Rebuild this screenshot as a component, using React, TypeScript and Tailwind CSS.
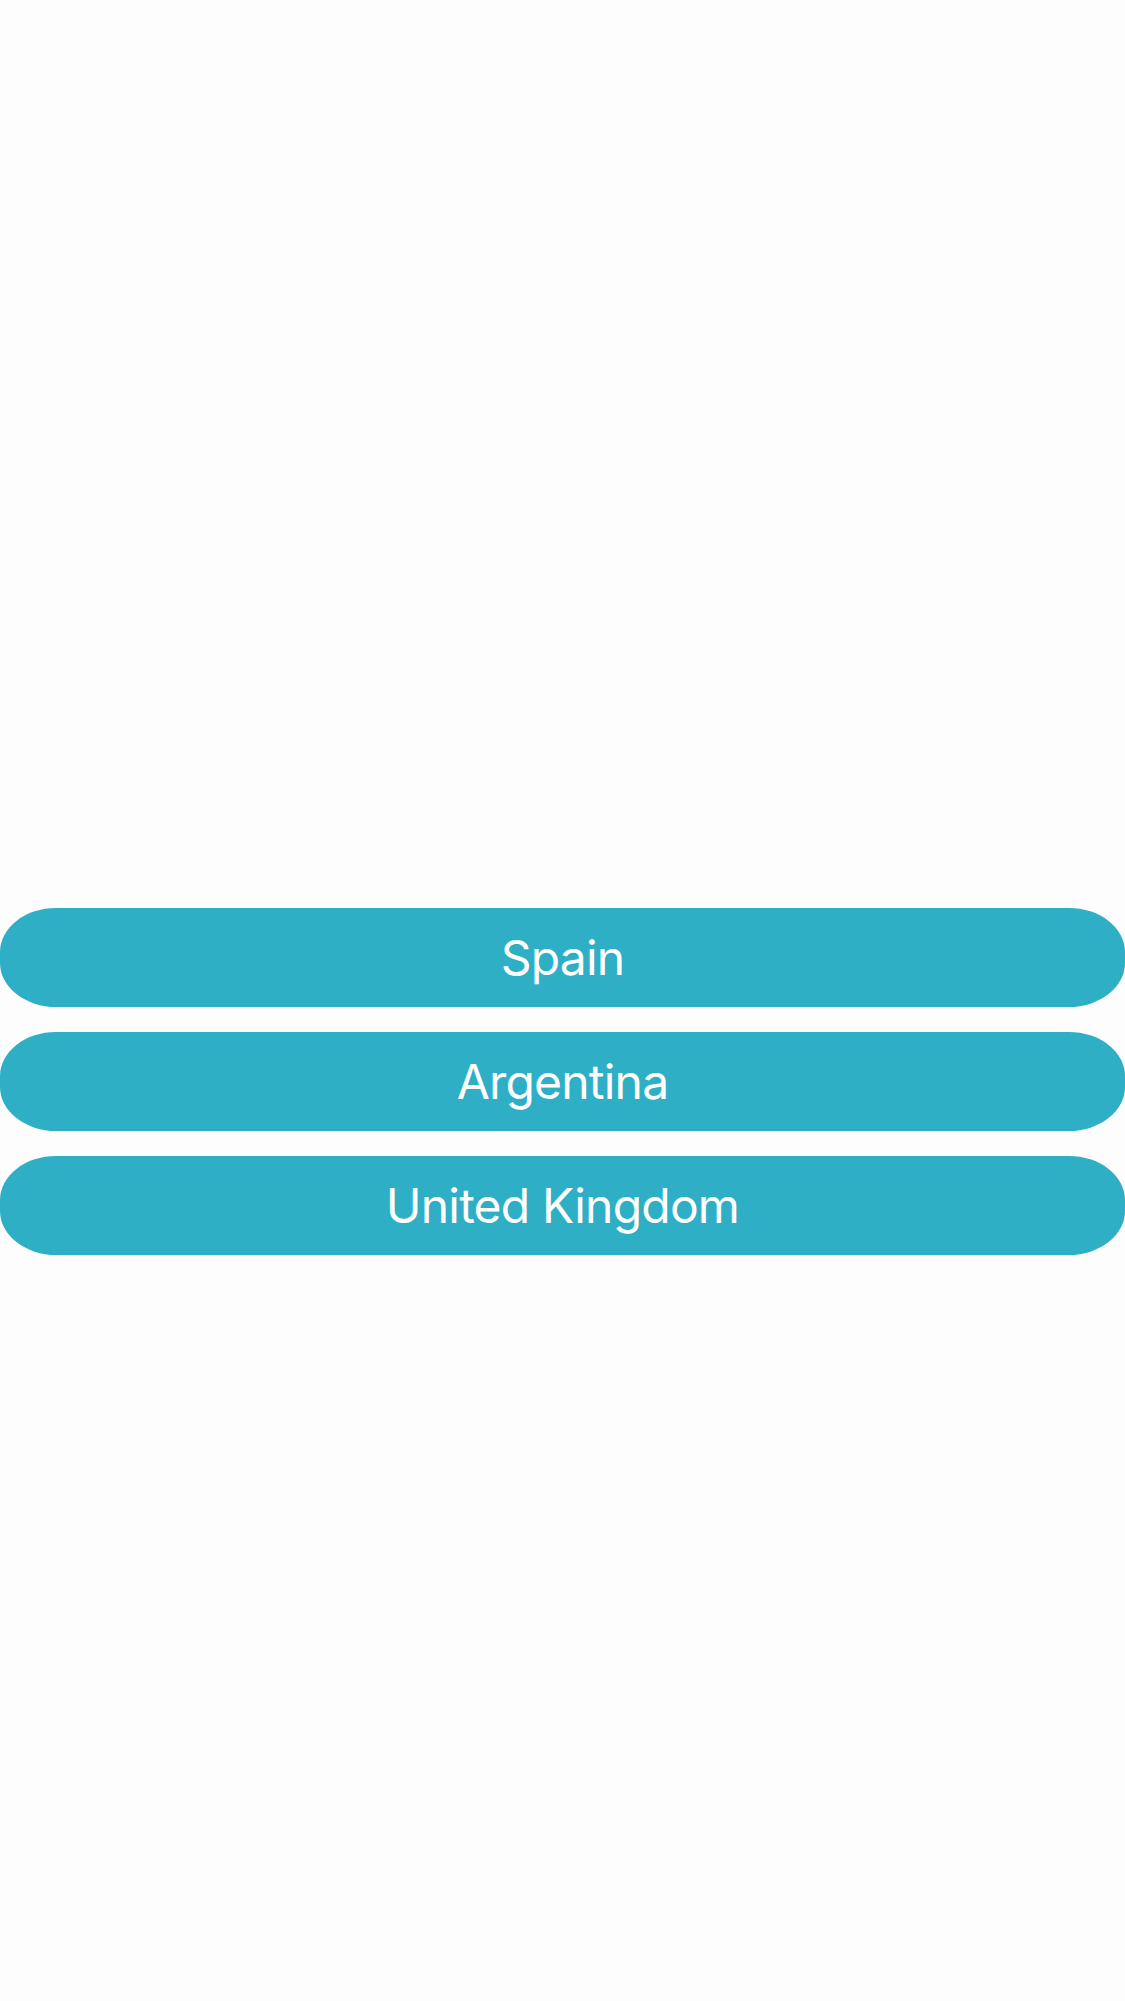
import React from "react";

const countries = ["Spain", "Argentina", "United Kingdom"];

const App = () => {
  return (
    <div className="min-h-[2001px] w-full bg-[#fdfdfd] pt-[908px] font-['Inter','Roboto',sans-serif]">
      <div className="flex flex-col gap-[25px]">
        {countries.map((name) => (
          <button
            key={name}
            className="flex h-[99px] w-full items-center justify-center rounded-[56px/44px] bg-[#2fafc6] text-[48px] font-normal tracking-[-0.8px] text-white"
          >
            {name}
          </button>
        ))}
      </div>
    </div>
  );
};

export default App;
